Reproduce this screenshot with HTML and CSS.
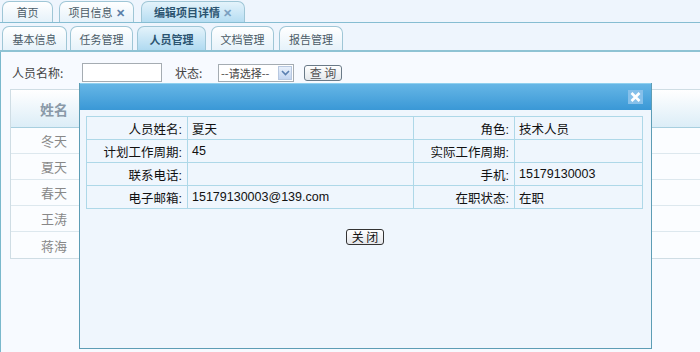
FILE: index.html
```html
<!DOCTYPE html>
<html>
<head>
<meta charset="utf-8">
<link rel="stylesheet" href="styles.css">
</head>
<body>
<div class="top-tabs">
  <div class="ttab">首页</div>
  <div class="ttab w2">项目信息 <span class="x">✕</span></div>
  <div class="ttab active w3">编辑项目详情 <span class="x">✕</span></div>
</div>
<div class="sub-tabs">
  <div class="stab s1">基本信息</div>
  <div class="stab s2">任务管理</div>
  <div class="stab s3 active">人员管理</div>
  <div class="stab s4">文档管理</div>
  <div class="stab s5">报告管理</div>
</div>
<div class="content">
  <div class="search">
    <span class="lbl">人员名称:</span>
    <span class="input"></span>
    <span class="lbl lbl2">状态:</span>
    <span class="select">--请选择--<span class="arrow"><svg width="9" height="6" viewBox="0 0 9 6"><path d="M1 1 L4.5 4.5 L8 1" fill="none" stroke="#5a7fb0" stroke-width="1.6"/></svg></span></span>
    <span class="btn">查 询</span>
  </div>
  <div class="grid">
    <div class="ghead"><div class="c1">姓名</div></div>
    <div class="grow"><div class="c1">冬天</div></div>
    <div class="grow"><div class="c1">夏天</div></div>
    <div class="grow"><div class="c1">春天</div></div>
    <div class="grow"><div class="c1">王涛</div></div>
    <div class="grow"><div class="c1">蒋海</div></div>
  </div>
</div>

<div class="dialog">
  <div class="dhead"><span class="dclose"><svg width="15" height="14" viewBox="0 0 15 14"><rect width="15" height="14" fill="#86c0ea"/><path d="M3.5 3 L11.5 11 M11.5 3 L3.5 11" stroke="#fff" stroke-width="2.6"/></svg></span></div>
  <div class="dbody">
    <table class="info">
      <tr><td class="l1">人员姓名:</td><td class="v1">夏天</td><td class="l2">角色:</td><td class="v2">技术人员</td></tr>
      <tr><td class="l1">计划工作周期:</td><td class="v1">45</td><td class="l2">实际工作周期:</td><td class="v2"></td></tr>
      <tr><td class="l1">联系电话:</td><td class="v1"></td><td class="l2">手机:</td><td class="v2">15179130003</td></tr>
      <tr><td class="l1">电子邮箱:</td><td class="v1">15179130003@139.com</td><td class="l2">在职状态:</td><td class="v2">在职</td></tr>
    </table>
    <div class="actions"><span class="closebtn">关 闭</span></div>
  </div>
</div>
</body>
</html>
```
FILE: styles.css
```css
* { box-sizing: border-box; }
html, body { margin: 0; padding: 0; }
body {
  width: 700px;
  height: 352px;
  overflow: hidden;
  background: #f7faff;
  font-family: "Noto Sans CJK SC", "Liberation Sans", sans-serif;
  font-size: 12px;
  color: #333;
  position: relative;
}
.top-tabs {
  height: 23px;
  background: #eef5fd;
  border-bottom: 1px solid #86bdd2;
  display: flex;
  align-items: flex-end;
  padding-left: 2px;
  gap: 6px;
}
.ttab {
  width: 51px;
  height: 21px;
  border: 1px solid #9fc6d6;
  border-bottom: none;
  border-radius: 7px 7px 0 0;
  background: linear-gradient(#ffffff, #e6f2fa);
  display: flex;
  align-items: center;
  justify-content: center;
  font-size: 11px;
  color: #4a5a66;
  line-height: 1;
}
.ttab.w2 { width: 75px; }
.ttab.w3 { width: 104px; margin-left: 1px; }
.ttab.active {
  background: linear-gradient(#e4f3fb, #b6ddf2);
  font-weight: bold;
  color: #2b5470;
}
.x { color: #7aa0c0; font-weight: bold; font-size: 11px; margin-left: 3px; }
.ttab.w2 .x { color: #5a7fa8; }
.sub-tabs {
  height: 29px;
  background: #eef5fd;
  border-bottom: 2px solid #8fc3d4;
  display: flex;
  align-items: flex-end;
  padding-left: 2px;
}
.stab {
  height: 24px;
  border: 1px solid #9fc6d6;
  border-bottom: none;
  border-radius: 7px 7px 0 0;
  background: linear-gradient(#ffffff, #e6f2fa);
  display: flex;
  align-items: center;
  justify-content: center;
  font-size: 11px;
  color: #4a5a66;
}
.s1 { width: 65px; }
.s2 { width: 63px; margin-left: 3px; }
.s3 { width: 69px; margin-left: 4px; }
.s4 { width: 63px; margin-left: 5px; }
.s5 { width: 64px; margin-left: 5px; }
.stab.active {
  background: linear-gradient(#e4f3fb, #b0daf1);
  font-weight: bold;
  color: #2b5470;
}
.content {
  border-left: 1px solid #7ab8cc;
  height: 300px;
  padding: 11px 0 0 9px;
}
.search {
  display: flex;
  align-items: center;
  height: 19px;
  font-size: 12px;
  color: #444;
}
.lbl { margin-left: 2px; width: 70px; }
.lbl2 { margin-left: 13px; width: 43px; }
.input {
  width: 80px;
  height: 19px;
  border: 1px solid #a5acb2;
  background: #fff;
}
.select {
  width: 76px;
  height: 18px;
  border: 1px solid #a5acb2;
  background: #fff;
  font-size: 11px;
  color: #444;
  display: flex;
  align-items: center;
  padding-left: 2px;
  justify-content: space-between;
}
.arrow {
  width: 14px;
  height: 14px;
  margin-right: 1px;
  background: linear-gradient(#e8f0fb, #c3d5f0);
  border: 1px solid #b8c8e0;
  display: flex;
  align-items: center;
  justify-content: center;
}
.btn {
  margin-left: 10px;
  width: 38px;
  height: 16px;
  border: 1px solid #6a7a88;
  border-radius: 3px;
  background: linear-gradient(#ffffff, #e4e8ec);
  font-size: 12px;
  color: #555;
  display: flex;
  align-items: center;
  justify-content: center;
  line-height: 1;
}
.grid {
  margin-top: 7px;
  width: 700px;
  border: 1px solid #cfdde4;
  border-right: none;
}
.ghead {
  height: 38px;
  background: linear-gradient(#ffffff, #dcedf7);
  border-bottom: 1px solid #a8cfdf;
  display: flex;
  align-items: center;
}
.c1 {
  width: 86px;
  text-align: center;
  font-size: 13px;
  color: #888;
}
.ghead .c1 { font-weight: bold; color: #8a9aa8; font-size: 14px; }
.grow {
  height: 26px;
  border-bottom: 1px solid #dde8ee;
  display: flex;
  align-items: center;
  background: #fbfdff;
}
.grow:last-child { border-bottom: none; height: 26px; }
.dialog {
  position: absolute;
  left: 79px;
  top: 83px;
  width: 573px;
  height: 266px;
  border: 1px solid #5d9db5;
  border-top: none;
  background: #eff6fd;
}
.dhead {
  height: 27px;
  background: linear-gradient(#66b6e6, #3a98d6);
  border-top: 1px solid #8fd0ef;
  display: flex;
  align-items: center;
  justify-content: flex-end;
  padding-right: 8px;
}
.dclose {
  width: 15px;
  height: 14px;
  display: flex;
}
.dbody { padding: 6px 7px 0 6px; }
.info {
  width: 557px;
  border-collapse: collapse;
  font-size: 12.5px;
  color: #111;
}
.info td {
  border: 1px solid #aed8e8;
  height: 23px;
  padding: 0 5px 0 4px;
  font-family: "Liberation Sans", "Noto Sans CJK SC", sans-serif;
}
.l1 { width: 101px; text-align: right; }
.v1 { width: 226px; }
.l2 { width: 101px; text-align: right; }
.actions {
  display: flex;
  justify-content: center;
  margin-top: 20px;
}
.closebtn {
  width: 38px;
  height: 16px;
  border: 1px solid #333;
  border-radius: 3px;
  background: linear-gradient(#ffffff, #e4e6ea);
  font-size: 12px;
  color: #111;
  display: flex;
  align-items: center;
  justify-content: center;
  line-height: 1;
}
```
